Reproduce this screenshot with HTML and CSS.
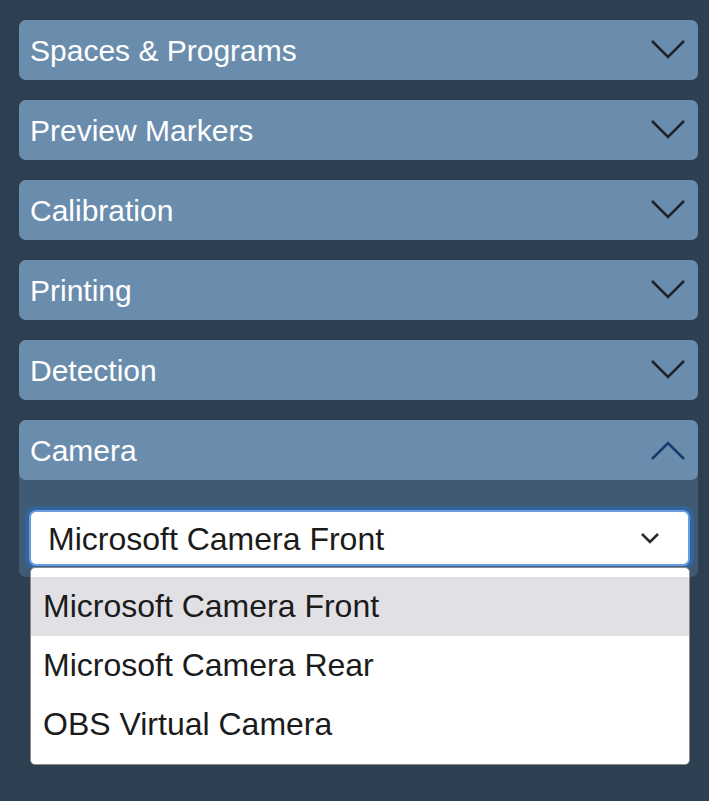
FILE: index.html
```html
<!DOCTYPE html>
<html>
<head>
<meta charset="utf-8">
<link rel="stylesheet" href="styles.css">
</head>
<body>
<div class="list">
  <div class="panel"><div class="head"><span>Spaces &amp; Programs</span><svg class="chev" viewBox="0 0 34 20"><path d="M1 1 L17 17 L33 1"/></svg></div></div>
  <div class="panel"><div class="head"><span>Preview Markers</span><svg class="chev" viewBox="0 0 34 20"><path d="M1 1 L17 17 L33 1"/></svg></div></div>
  <div class="panel"><div class="head"><span>Calibration</span><svg class="chev" viewBox="0 0 34 20"><path d="M1 1 L17 17 L33 1"/></svg></div></div>
  <div class="panel"><div class="head"><span>Printing</span><svg class="chev" viewBox="0 0 34 20"><path d="M1 1 L17 17 L33 1"/></svg></div></div>
  <div class="panel"><div class="head"><span>Detection</span><svg class="chev" viewBox="0 0 34 20"><path d="M1 1 L17 17 L33 1"/></svg></div></div>
  <div class="panel open">
    <div class="head"><span>Camera</span><svg class="chev up" viewBox="0 0 34 20"><path d="M1 19 L17 3 L33 19"/></svg></div>
    <div class="body">
      <div class="selectwrap">
        <div class="select"><span>Microsoft Camera Front</span><svg class="schev" viewBox="0 0 20 12"><path d="M2 2 L10 10 L18 2"/></svg></div>
        <div class="menu">
          <div class="opt sel">Microsoft Camera Front</div>
          <div class="opt">Microsoft Camera Rear</div>
          <div class="opt">OBS Virtual Camera</div>
        </div>
      </div>
    </div>
  </div>
</div>
</body>
</html>
```
FILE: styles.css
```css
html, body { margin: 0; padding: 0; }
body {
  background: #2e3f51;
  width: 709px;
  height: 801px;
  font-family: "Liberation Sans", Arial, sans-serif;
  overflow: hidden;
}
.list {
  padding: 20px 11px 0 19px;
  display: flex;
  flex-direction: column;
  gap: 20px;
}
.panel {
  border-radius: 7px;
  background: #3f5a72;
}
.head {
  height: 60px;
  background: #6b8dad;
  border-radius: 7px;
  display: flex;
  align-items: center;
  justify-content: space-between;
  padding: 0 13px 0 11px;
  color: #fff;
  font-size: 30px;
}
.head span { position: relative; top: 1px; }
.chev {
  width: 34px;
  height: 20px;
  fill: none;
  stroke: #202328;
  stroke-width: 2.5;
}
.chev.up { stroke: #163a6e; }
.body {
  padding: 30px 8px 10px 10px;
  height: 57px;
}
.selectwrap { position: relative; }
.select {
  height: 52px;
  background: #fff;
  border: 2px solid #6a9de0;
  border-radius: 7px;
  box-shadow: 0 0 0 4px #35649a;
  display: flex;
  align-items: center;
  justify-content: space-between;
  padding: 0 28px 0 17px;
  font-size: 32px;
  color: #1b1b1b;
}
.select span { position: relative; top: 1px; }
.schev {
  width: 20px;
  height: 12px;
  fill: none;
  stroke: #2a2a2a;
  stroke-width: 2.6;
}
.menu {
  position: absolute;
  left: 1px;
  right: 0;
  top: 57px;
  background: #fff;
  border: 1px solid #8c8c8c;
  border-radius: 5px;
  padding: 9px 0 10px 0;
  z-index: 5;
}
.opt {
  height: 59px;
  display: flex;
  align-items: center;
  padding: 0 13px 0 12px;
  font-size: 32px;
  color: #1b1b1b;
}
.opt span { position: relative; top: 1px; }
.opt.sel { background: #e1e0e5; }
```
